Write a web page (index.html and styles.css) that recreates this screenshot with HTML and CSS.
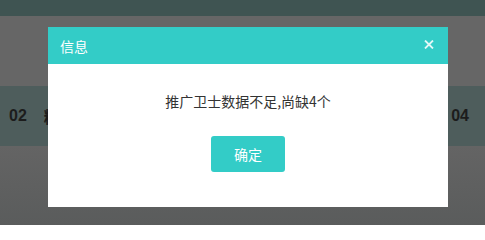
FILE: index.html
```html
<!DOCTYPE html>
<html lang="zh">
<head>
<meta charset="utf-8">
<title>信息</title>
<link rel="stylesheet" href="styles.css">
</head>
<body>
<div class="page">
  <div class="topbar"></div>
  <div class="band"></div>
  <div class="row">
    <span class="num">02</span>
    <span class="name">精</span>
    <span class="spacer"></span>
    <span class="num">04</span>
  </div>
  <div class="rest"></div>
</div>
<div class="dialog">
  <div class="dialog-head">
    <span class="dialog-title">信息</span>
    <svg class="close" width="10" height="9" viewBox="0 0 10 9"><path d="M1 0.5 L9 8.5 M9 0.5 L1 8.5" stroke="#e3f8f7" stroke-width="1.8" fill="none"/></svg>
  </div>
  <div class="dialog-body">
    <p class="msg">推广卫士数据不足,尚缺4个</p>
    <button class="ok">确定</button>
  </div>
</div>
</body>
</html>
```
FILE: styles.css
```css
html, body {
  margin: 0;
  padding: 0;
  width: 485px;
  height: 225px;
  overflow: hidden;
  font-family: "Noto Sans", "Noto Sans CJK SC", sans-serif;
}
.page {
  display: flex;
  flex-direction: column;
  height: 225px;
}
.topbar {
  height: 16px;
  background: #3f5452;
}
.band {
  height: 70px;
  background: #666666;
}
.row {
  height: 60px;
  background: #4e5d5c;
  display: flex;
  align-items: center;
  padding: 0 16px 0 9px;
  color: #1c1c1c;
  font-weight: bold;
  font-size: 16px;
  font-family: "Liberation Sans", "Noto Sans CJK SC", sans-serif;
}
.name {
  margin-left: 17px;
}
.spacer {
  flex: 1;
}
.rest {
  flex: 1;
  background: linear-gradient(#646464, #5a5c5c);
}
.dialog {
  position: absolute;
  left: 48px;
  top: 27px;
  width: 400px;
  height: 180px;
  background: #fff;
  display: flex;
  flex-direction: column;
}
.dialog-head {
  height: 37px;
  background: #33ccc7;
  display: flex;
  align-items: center;
  justify-content: space-between;
  padding: 0 14px 0 12px;
  color: #fff;
  font-size: 14px;
}
.dialog-title {
  line-height: 20px;
  font-family: "Noto Sans CJK SC", sans-serif;
}
.close {
  display: block;
  margin-top: -2px;
}
.dialog-body {
  display: flex;
  flex-direction: column;
  align-items: center;
  padding-top: 27px;
}
.msg {
  margin: 0;
  font-size: 14px;
  line-height: 20px;
  color: #333;
  font-family: "Noto Sans CJK SC", sans-serif;
}
.ok {
  margin-top: 25px;
  width: 74px;
  height: 36px;
  border: none;
  border-radius: 3px;
  background: #33ccc7;
  color: #fff;
  font-size: 14px;
  font-family: "Noto Sans CJK SC", sans-serif;
  padding: 0;
}
```
